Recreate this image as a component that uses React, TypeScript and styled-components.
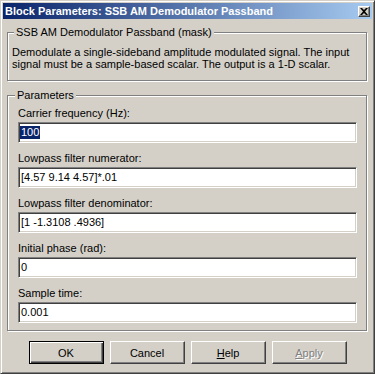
import styled, { createGlobalStyle } from 'styled-components';

const GlobalStyle = createGlobalStyle`
  html, body {
    margin: 0;
    padding: 0;
    background: #d4d0c8;
  }
  * {
    box-sizing: border-box;
  }
`;

const Window = styled.div`
  width: 375px;
  height: 374px;
  display: flex;
  flex-direction: column;
  padding: 1px;
  background: #d4d0c8;
  border: 1px solid;
  border-color: #d4d0c8 #404040 #404040 #d4d0c8;
  box-shadow: inset 1px 1px 0 #ffffff, inset -1px -1px 0 #808080;
  font-family: 'Liberation Sans', Arial, sans-serif;
  font-size: 11px;
  color: #000;
`;

const TitleBar = styled.div`
  height: 16px;
  display: flex;
  align-items: center;
  justify-content: space-between;
  padding: 0 2px 0 2px;
  margin: 1px 1px 0 1px;
  background: linear-gradient(90deg, #0a246a 0%, #a6caf0 100%);
`;

const TitleText = styled.div`
  font-family: 'Liberation Sans', Arial, sans-serif;
  font-weight: bold;
  font-size: 11px;
  color: #ffffff;
  white-space: nowrap;
`;

const CloseButton = styled.div`
  width: 12px;
  height: 11px;
  background: #d4d0c8;
  border: 1px solid;
  border-color: #ffffff #404040 #404040 #ffffff;
  box-shadow: inset -1px -1px 0 #808080;
  display: flex;
  align-items: center;
  justify-content: center;
`;

const Body = styled.div`
  display: flex;
  flex-direction: column;
  padding: 0 5px;
`;

const GroupBox = styled.div<{ $top: number; $height: number }>`
  position: relative;
  margin-top: ${(p) => p.$top}px;
  height: ${(p) => p.$height}px;
  border: 1px solid #808080;
  box-shadow: inset 1px 1px 0 #ffffff, 1px 1px 0 #ffffff;
  margin-right: 1px;
`;

const Legend = styled.span<{ $left: number }>`
  position: absolute;
  top: -7px;
  left: ${(p) => p.$left}px;
  padding: 0 2px;
  line-height: 13px;
  background: #d4d0c8;
  white-space: nowrap;
`;

const Description = styled.div`
  padding: 13px 8px 0 4px;
  line-height: 12px;
`;

const FieldList = styled.div`
  display: flex;
  flex-direction: column;
  gap: 9px;
  padding: 11px 9px 0 10px;
`;

const Field = styled.div`
  display: flex;
  flex-direction: column;
  gap: 2px;
`;

const Label = styled.div`
  line-height: 13px;
  height: 13px;
  white-space: nowrap;
`;

const Edit = styled.div`
  height: 21px;
  display: flex;
  align-items: center;
  padding-left: 1px;
  background: #ffffff;
  border: 1px solid;
  border-color: #808080 #ffffff #ffffff #808080;
  box-shadow: inset 1px 1px 0 #404040, inset -1px -1px 0 #d4d0c8;
  white-space: nowrap;
  overflow: hidden;
`;

const EditText = styled.span`
  padding-left: 1px;
  line-height: 13px;
`;

const Selected = styled.span`
  line-height: 13px;
  padding: 0 1px 0 1px;
  background: #0a246a;
  color: #ffffff;
`;

const ButtonRow = styled.div`
  display: flex;
  justify-content: center;
  gap: 6px;
  margin-top: 10px;
`;

const Button = styled.div<{ $default?: boolean; $disabled?: boolean }>`
  width: 75px;
  height: 23px;
  display: flex;
  align-items: center;
  justify-content: center;
  background: #d4d0c8;
  border: 1px solid;
  border-color: ${(p) =>
    p.$default ? '#000000' : '#ffffff #404040 #404040 #ffffff'};
  box-shadow: ${(p) =>
    p.$default
      ? 'inset 1px 1px 0 #ffffff, inset -1px -1px 0 #404040, inset -2px -2px 0 #808080'
      : 'inset -1px -1px 0 #808080'};
  color: ${(p) => (p.$disabled ? '#808080' : '#000000')};
  text-shadow: ${(p) => (p.$disabled ? '1px 1px 0 #ffffff' : 'none')};
`;

const fields = [
  { label: 'Carrier frequency (Hz):', value: '100', selected: true },
  { label: 'Lowpass filter numerator:', value: '[4.57 9.14 4.57]*.01' },
  { label: 'Lowpass filter denominator:', value: '[1 -1.3108 .4936]' },
  { label: 'Initial phase (rad):', value: '0' },
  { label: 'Sample time:', value: '0.001' },
];

export default function App() {
  return (
    <>
      <GlobalStyle />
      <Window>
        <TitleBar>
          <TitleText>Block Parameters: SSB AM Demodulator Passband</TitleText>
          <CloseButton>
            <svg width="8" height="7" viewBox="0 0 8 7">
              <path d="M0 0h2l2 2 2-2h2L5 3.5 8 7H6L4 5 2 7H0l3-3.5z" fill="#000" />
            </svg>
          </CloseButton>
        </TitleBar>
        <Body>
          <GroupBox $top={13} $height={49}>
            <Legend $left={6}>SSB AM Demodulator Passband (mask)</Legend>
            <Description>
              Demodulate a single-sideband amplitude modulated signal. The input
              signal must be a sample-based scalar. The output is a 1-D scalar.
            </Description>
          </GroupBox>
          <GroupBox $top={14} $height={236}>
            <Legend $left={7}>Parameters</Legend>
            <FieldList>
              {fields.map((f) => (
                <Field key={f.label}>
                  <Label>{f.label}</Label>
                  <Edit>
                    {f.selected ? (
                      <Selected>{f.value}</Selected>
                    ) : (
                      <EditText>{f.value}</EditText>
                    )}
                  </Edit>
                </Field>
              ))}
            </FieldList>
          </GroupBox>
          <ButtonRow>
            <Button $default>OK</Button>
            <Button>Cancel</Button>
            <Button>
              <span>
                <u>H</u>elp
              </span>
            </Button>
            <Button $disabled>
              <span>
                <u>A</u>pply
              </span>
            </Button>
          </ButtonRow>
        </Body>
      </Window>
    </>
  );
}
